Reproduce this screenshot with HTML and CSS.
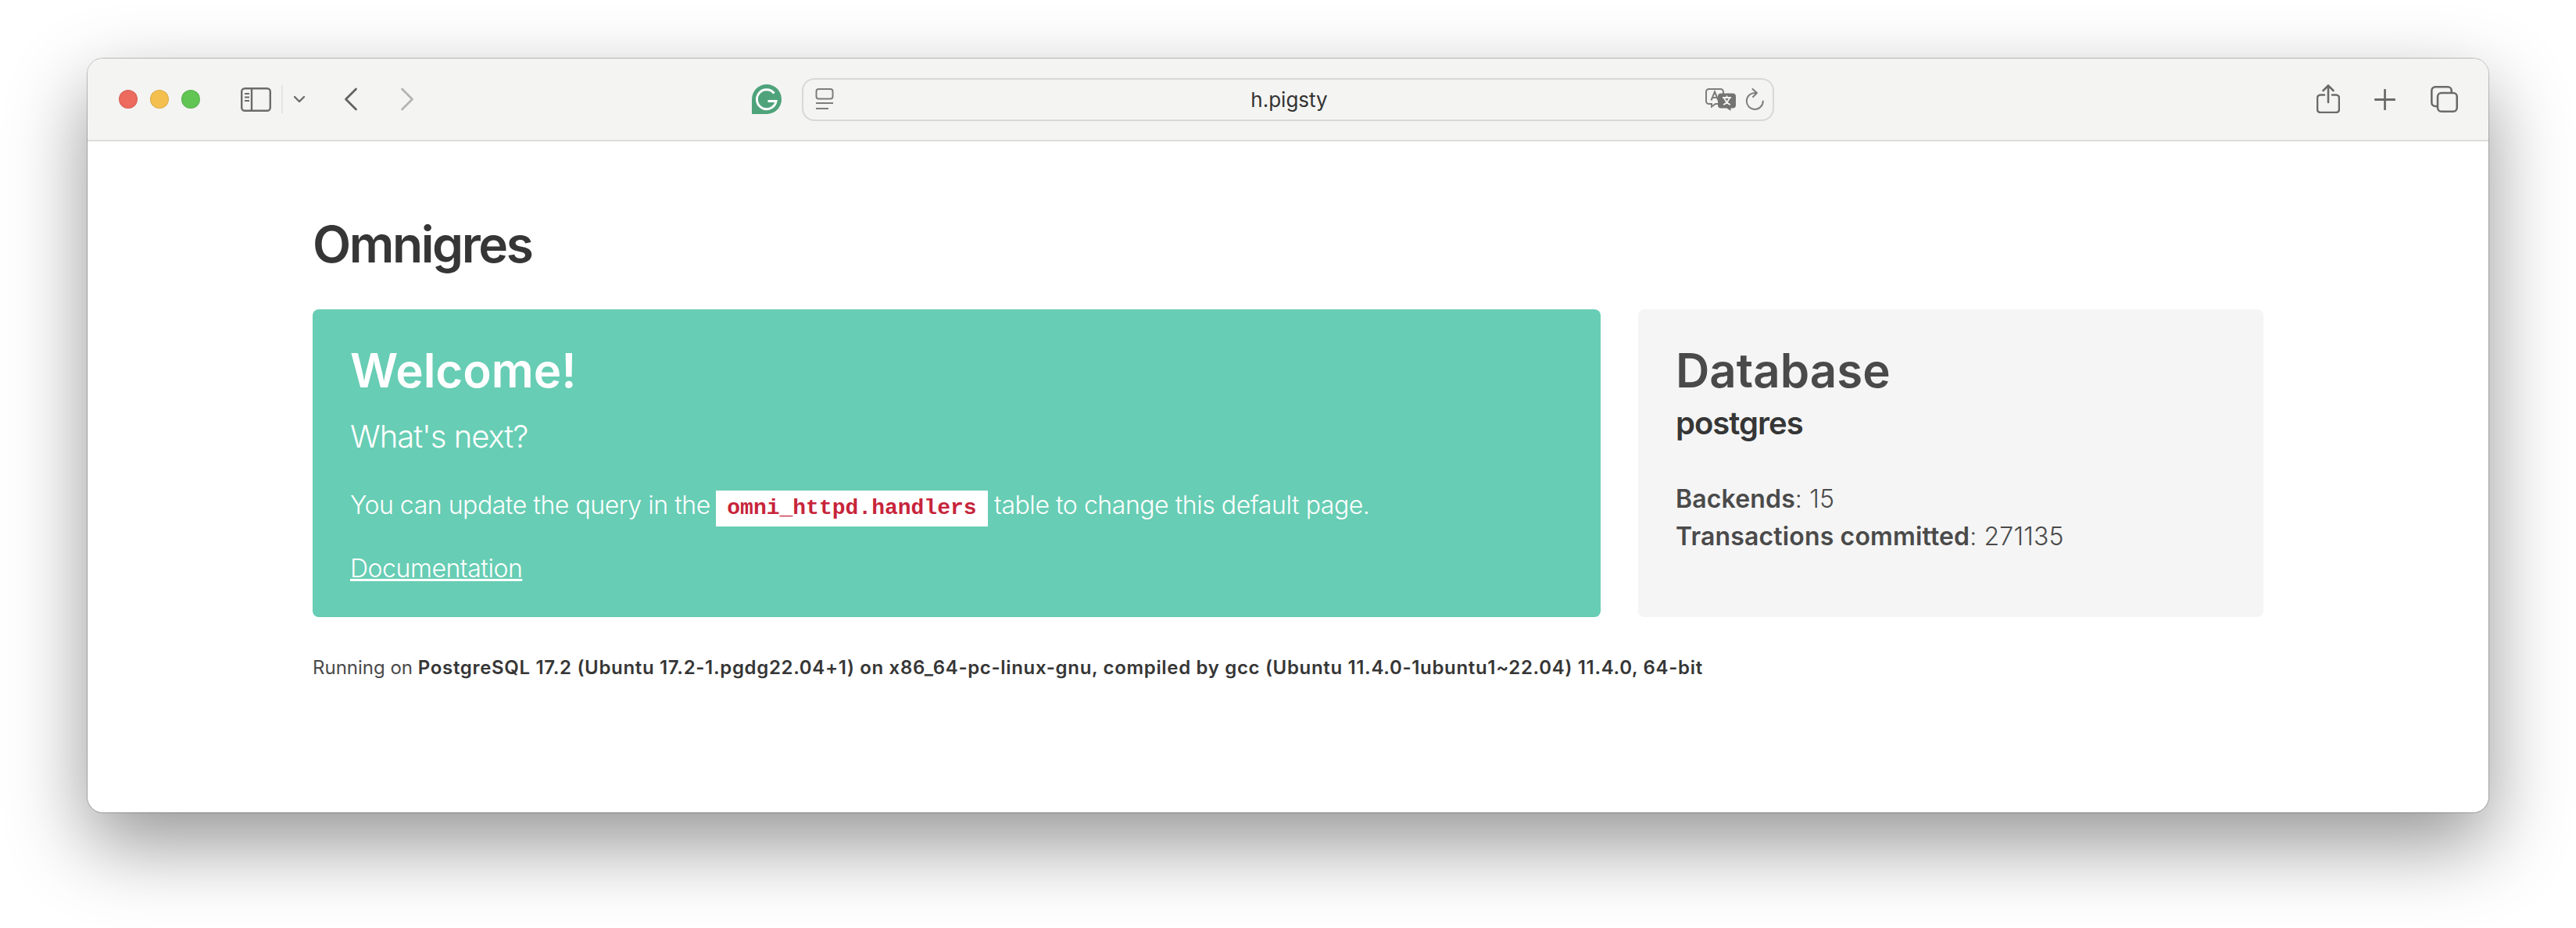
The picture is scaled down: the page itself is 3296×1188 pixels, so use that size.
FILE: index.html
```html
<!DOCTYPE html>
<html lang="en">
<head>
<meta charset="utf-8">
<title>Omnigres</title>
<link rel="stylesheet" href="styles.css">
</head>
<body>
<div class="window">
  <header class="toolbar">
    <div class="lights">
      <span class="light red"></span><span class="light yellow"></span><span class="light green"></span>
    </div>
    <svg class="ic-sidebar" width="39" height="31" viewBox="0 0 39 31" fill="none" stroke="#6b6b69" stroke-width="2.4">
      <rect x="1.2" y="1.2" width="36.6" height="28.6" rx="4"/>
      <path d="M14 1.2V29.8"/>
      <path d="M5 8h6M5 12.5h6M5 17h6" stroke-width="2"/>
    </svg>
    <span class="divider"></span>
    <svg class="ic-chev" width="16" height="10" viewBox="0 0 16 10" fill="none" stroke="#6b6b69" stroke-width="2.4" stroke-linecap="round" stroke-linejoin="round">
      <path d="M2 2l6 6 6-6"/>
    </svg>
    <svg class="ic-back" width="18" height="30" viewBox="0 0 18 30" fill="none" stroke="#636361" stroke-width="2.8" stroke-linecap="round" stroke-linejoin="round">
      <path d="M15.5 2L2.5 15l13 13"/>
    </svg>
    <svg class="ic-forward" width="18" height="30" viewBox="0 0 18 30" fill="none" stroke="#b4b4b2" stroke-width="2.8" stroke-linecap="round" stroke-linejoin="round">
      <path d="M2.5 2l13 13-13 13"/>
    </svg>
    <svg class="ic-grammarly" width="38" height="38" viewBox="0 0 38 38">
      <path d="M19 0a19 19 0 0 1 0 38H0V19A19 19 0 0 1 19 0z" fill="#4fa37b"/>
      <path d="M28.5 11.5A12.4 12.4 0 1 0 31 21.5H20.5" fill="none" stroke="#fff" stroke-width="3"/>
    </svg>
    <div class="urlbar">
      <svg class="ic-reader" width="24" height="28" viewBox="0 0 24 28" fill="none" stroke="#7d7d7b" stroke-width="2">
        <rect x="1.5" y="1" width="21" height="12.5" rx="3"/>
        <path d="M1 19h22M1 26h16"/>
      </svg>
      <span class="url-text">h.pigsty</span>
      <svg class="ic-translate" width="39" height="29" viewBox="0 0 39 29" fill="none">
        <path d="M4.5 1h15A3.5 3.5 0 0 1 23 4.500v12A3.500 3.500 0 0 1 19.500 20H13l-5 3.500V20H4.500A3.500 3.500 0 0 1 1 16.500v-12A3.500 3.500 0 0 1 4.500 1z" stroke="#7d7d7b" stroke-width="2"/>
        <path d="M7.500 15.500L12 4.500l4.500 11M9 12h6" stroke="#7d7d7b" stroke-width="2"/>
        <path d="M20 6.500h15a4 4 0 0 1 4 4v11a4 4 0 0 1-4 4h-2.500V29l-5-3.500H20a4 4 0 0 1-4-4v-11a4 4 0 0 1 4-4z" fill="#737371"/>
        <path d="M22 12h11M27.500 9.500V12M31 12c-1 4-5 8-8 9M24 12c1 4 5 8 8 9" stroke="#f4f4f2" stroke-width="1.800"/>
      </svg>
      <svg class="ic-reload" width="24" height="28" viewBox="0 0 24 28" fill="none" stroke="#7d7d7b" stroke-width="2" stroke-linecap="round" stroke-linejoin="round">
        <path d="M13.500 6A10.500 10.500 0 1 0 22.800 16.500"/>
        <path d="M9.500 1l5.500 5-5 5"/>
      </svg>
    </div>
    <div class="tools-right">
      <svg class="ic-share" width="30" height="37" viewBox="0 0 30 37" fill="none" stroke="#6b6b69" stroke-width="2.6" stroke-linecap="round" stroke-linejoin="round">
        <path d="M10 13.500H5a4 4 0 0 0-4 4V32a4 4 0 0 0 4 4h20a4 4 0 0 0 4-4V17.500a4 4 0 0 0-4-4h-5"/>
        <path d="M15 23V1.500M8.500 8L15 1.500 21.500 8"/>
      </svg>
      <svg class="ic-plus" width="27" height="27" viewBox="0 0 27 27" fill="none" stroke="#6b6b69" stroke-width="2.800" stroke-linecap="round">
        <path d="M13.500 1v25M1 13.500h25"/>
      </svg>
      <svg class="ic-tabs" width="35" height="34" viewBox="0 0 35 34" fill="none" stroke="#6b6b69" stroke-width="2.600">
        <path d="M8 26H6a4.700 4.700 0 0 1-4.700-4.700V6A4.700 4.700 0 0 1 6 1.300h16A4.700 4.700 0 0 1 26.700 6v2"/>
        <rect x="9" y="9" width="24.700" height="23.700" rx="4.700"/>
      </svg>
    </div>
  </header>
  <main class="page">
    <h1 class="title">Omnigres</h1>
    <div class="columns">
      <section class="card card-welcome">
        <h2 class="card-title">Welcome!</h2>
        <p class="subtitle">What's next?</p>
        <p class="body-line">You can update the query in the <code class="code">omni_httpd.handlers</code> table to change this default page.</p>
        <p class="body-line link-line"><a class="link" href="#">Documentation</a></p>
      </section>
      <section class="card card-db">
        <h2 class="card-title">Database</h2>
        <p class="db-name">postgres</p>
        <p class="stat first"><strong>Backends</strong>: 15</p>
        <p class="stat"><strong>Transactions committed</strong>: 271135</p>
      </section>
    </div>
    <p class="footer">Running on <strong>PostgreSQL 17.2 (Ubuntu 17.2-1.pgdg22.04+1) on x86_64-pc-linux-gnu, compiled by gcc (Ubuntu 11.4.0-1ubuntu1~22.04) 11.4.0, 64-bit</strong></p>
  </main>
</div>
</body>
</html>
```
FILE: styles.css
```css
* { box-sizing: border-box; }
html, body { margin: 0; background: #fff; }
body {
  width: 3296px;
  height: 1188px;
  padding: 75px 112px 0;
  overflow: hidden;
  font-family: Inter, "Liberation Sans", sans-serif;
  color: #4a4a4a;
}
.window {
  height: 965px;
  background: #fff;
  border-radius: 20px;
  box-shadow: 0 0 0 1px rgba(0,0,0,.22), 0 40px 100px rgba(0,0,0,.42);
}
.toolbar {
  display: flex;
  align-items: center;
  height: 106px;
  padding: 0 39px 0 40px;
  background: #f4f4f2;
  border-bottom: 2px solid #dcdcda;
  border-radius: 20px 20px 0 0;
}
.lights { display: flex; gap: 16px; margin-right: 52px; }
.light { width: 24px; height: 24px; border-radius: 50%; border: 1px solid rgba(0,0,0,.1); }
.red { background: #ec6a5e; }
.yellow { background: #f4bf4f; }
.green { background: #61c554; }
.divider { width: 2px; height: 36px; margin: 0 13px 0 13px; background: #e4e4e2; }
.ic-back { margin-left: 49px; }
.ic-forward { margin-left: 54px; }
.ic-grammarly { margin-left: 432px; }
.urlbar {
  display: flex;
  align-items: center;
  width: 1244px;
  height: 55px;
  margin-left: 26px;
  padding: 0 11px 0 15px;
  border: 2px solid #d8d8d6;
  border-radius: 16px;
}
.url-text {
  flex: 1;
  padding-left: 50px;
  text-align: center;
  font-size: 26px;
  color: #333;
}
.ic-reload { margin-left: 12px; }
.tools-right { display: flex; align-items: center; margin-left: auto; }
.ic-share { margin: 0 2px 2px 0; }
.ic-plus { margin: 0 45px 0 42px; }
.page { padding: 96px 288px 0; }
.title {
  margin: 0 0 47px;
  font-size: 64px;
  line-height: 72px;
  font-weight: 600;
  letter-spacing: -2.4px;
  color: #363636;
}
.columns { display: grid; grid-template-columns: 1648px 800px; grid-template-rows: 394px; gap: 48px; }
.card { padding: 42px 48px 0; border-radius: 8px; }
.card-welcome { background: #67cdb4; color: #fff; }
.card-db { background: #f5f5f5; }
.card-title { margin: 0; font-size: 60px; line-height: 72px; font-weight: 600; }
.subtitle { margin: 24px 0 0; font-size: 40px; line-height: 50px; font-weight: 300; letter-spacing: -1px; }
.body-line { margin: 39px 0 0; font-size: 32px; line-height: 48px; font-weight: 300; letter-spacing: -.45px; }
.link-line { margin-top: 30px; }
.link { color: #fff; text-decoration: underline; }
.code {
  display: inline-block;
  margin: 0 0 0 -1px;
  padding: 0 14px;
  background: #fff;
  color: #c7243a;
  font-family: "Liberation Mono", monospace;
  font-size: 28px;
  line-height: 46px;
  font-weight: 700;
  letter-spacing: 0;
}
.db-name { margin: 7px 0 0; font-size: 40px; line-height: 50px; font-weight: 600; letter-spacing: -1px; color: #363636; }
.stat { margin: 0; font-size: 32px; line-height: 48px; font-weight: 300; letter-spacing: .15px; }
.stat.first { margin-top: 48px; }
.stat strong { font-weight: 600; }
.footer { margin: 47px 0 0; font-size: 24px; line-height: 36px; color: #4a4a4a; }
.footer strong { font-weight: 600; letter-spacing: .67px; color: #363636; }
```
